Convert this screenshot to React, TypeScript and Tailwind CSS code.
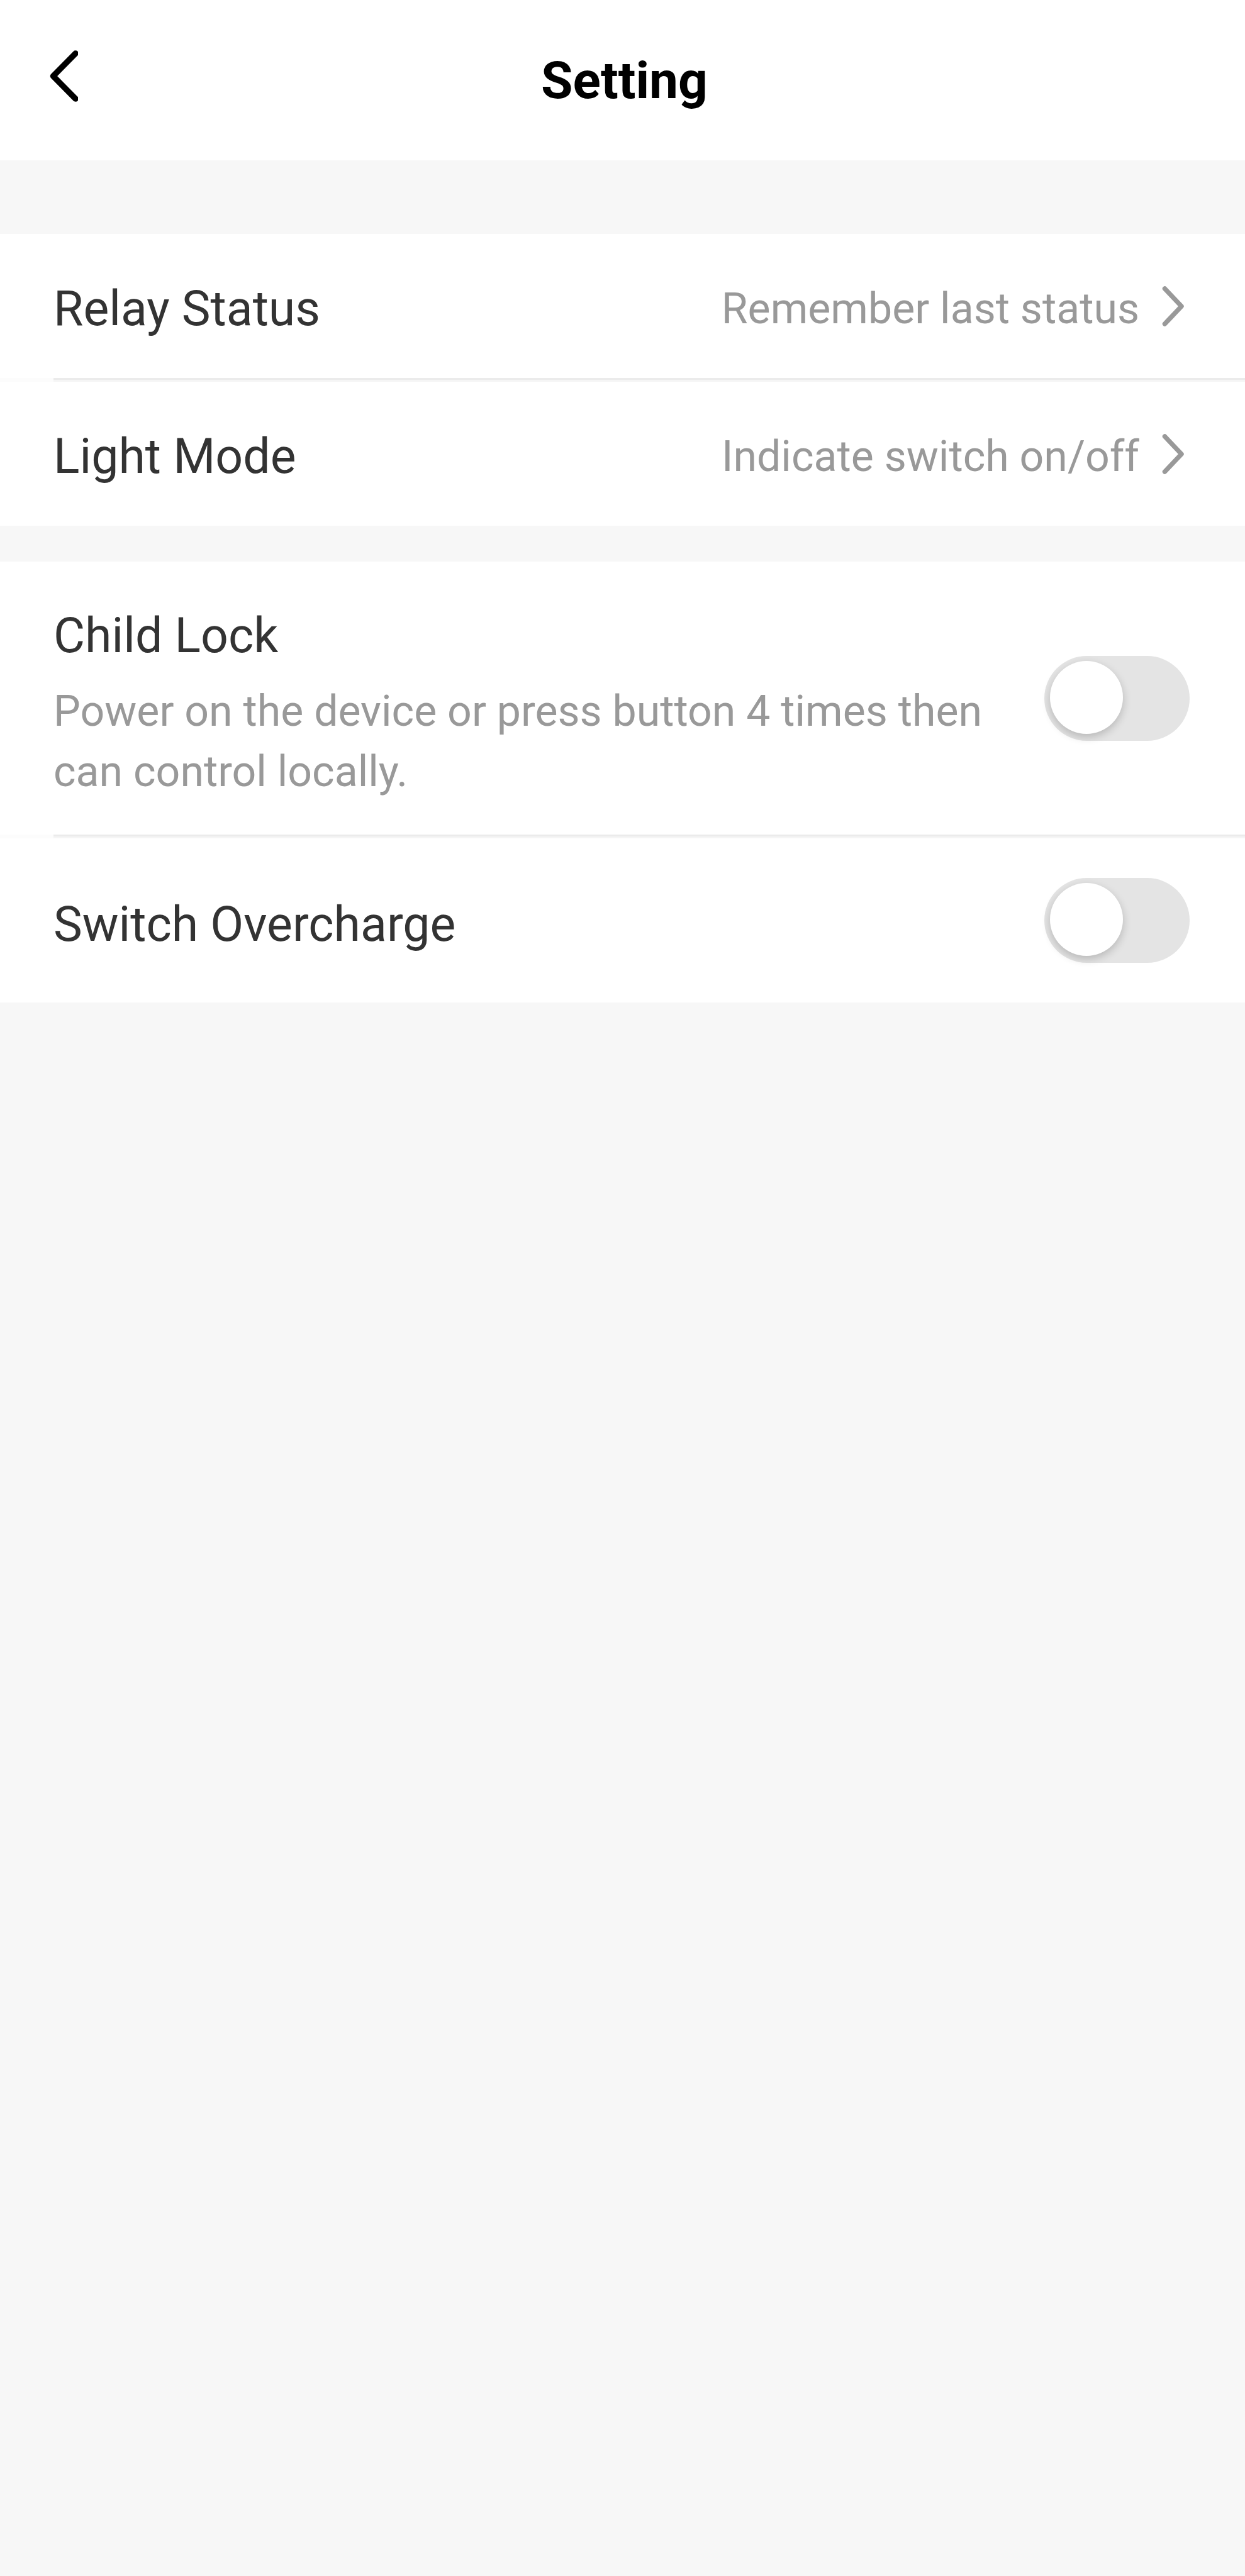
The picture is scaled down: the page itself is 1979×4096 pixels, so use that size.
import { useState } from "react"

type LinkRowProps = {
  label: string
  value: string
}

type SwitchRowProps = {
  id: string
  label: string
  description?: string
}

const Divider = () => (
  <div className="bg-[#fcfcfc] pl-[85px]">
    <div className="h-[6px] border-t-[3px] border-[#ebebeb] bg-[#f5f5f5]" />
  </div>
)

const LinkRow = ({ label, value }: LinkRowProps) => (
  <button type="button" className="flex h-[229px] w-full items-center pr-[96px] pl-[85px] text-left">
    <span className="flex-1 pt-2 text-[77px] leading-[96px] text-[#333333]">{label}</span>
    <span className="pt-2 text-[68px] leading-[96px] text-[#999999]">{value}</span>
    <svg viewBox="0 0 36 66" className="ml-9 h-[66px] w-9" fill="none" aria-hidden="true">
      <path
        d="M4.500 5 L31 33 L4.500 61"
        stroke="#999999"
        strokeWidth="7.500"
        strokeLinecap="round"
        strokeLinejoin="round"
      />
    </svg>
  </button>
)

const SwitchRow = ({ id, label, description }: SwitchRowProps) => {
  const [on, setOn] = useState(false)

  return (
    <div className="flex min-h-[261px] items-center justify-between py-[52px] pr-[88px] pl-[85px]">
      <div className="flex-1 pr-[60px]">
        <label htmlFor={id} className="block pt-3 text-[77px] leading-[108px] text-[#333333]">
          {label}
        </label>
        {description && <p className="mt-[18px] text-[68px] leading-[96px] text-[#999999]">{description}</p>}
      </div>
      <input
        id={id}
        type="checkbox"
        role="switch"
        checked={on}
        onChange={(e) => setOn(e.target.checked)}
        className="h-[135px] w-[231px] shrink-0 cursor-pointer appearance-none rounded-full bg-[#e4e4e4] px-[9px] pt-2 before:block before:size-[116px] before:rounded-full before:bg-white before:shadow-[0_5px_14px_rgba(0,0,0,0.2)] before:content-[''] checked:bg-[#4cd964] checked:before:ml-auto"
      />
    </div>
  )
}

const App = () => {
  return (
    <div className="min-h-screen bg-[#f7f7f7] font-[Roboto,sans-serif]">
      <header className="grid h-[255px] grid-cols-[1fr_auto_1fr] items-center bg-white pr-[73px] pl-[79px]">
        <button type="button" aria-label="Back" className="w-fit pb-[14px]">
          <svg viewBox="0 0 45 84" className="h-[84px] w-[45px]" fill="none" aria-hidden="true">
            <path
              d="M41 6 L5.500 42 L41 78"
              stroke="#000000"
              strokeWidth="9.500"
              strokeLinecap="round"
              strokeLinejoin="round"
            />
          </svg>
        </button>
        <h1 className="text-[82px] leading-[100px] font-bold text-black">Setting</h1>
      </header>

      <main>
        <section className="mt-[117px] bg-white">
          <LinkRow label="Relay Status" value="Remember last status" />
          <Divider />
          <LinkRow label="Light Mode" value="Indicate switch on/off" />
        </section>

        <section className="mt-[57px] bg-white">
          <SwitchRow
            id="child-lock"
            label="Child Lock"
            description="Power on the device or press button 4 times then can control locally."
          />
          <Divider />
          <SwitchRow id="switch-overcharge" label="Switch Overcharge" />
        </section>
      </main>
    </div>
  )
}

export default App
